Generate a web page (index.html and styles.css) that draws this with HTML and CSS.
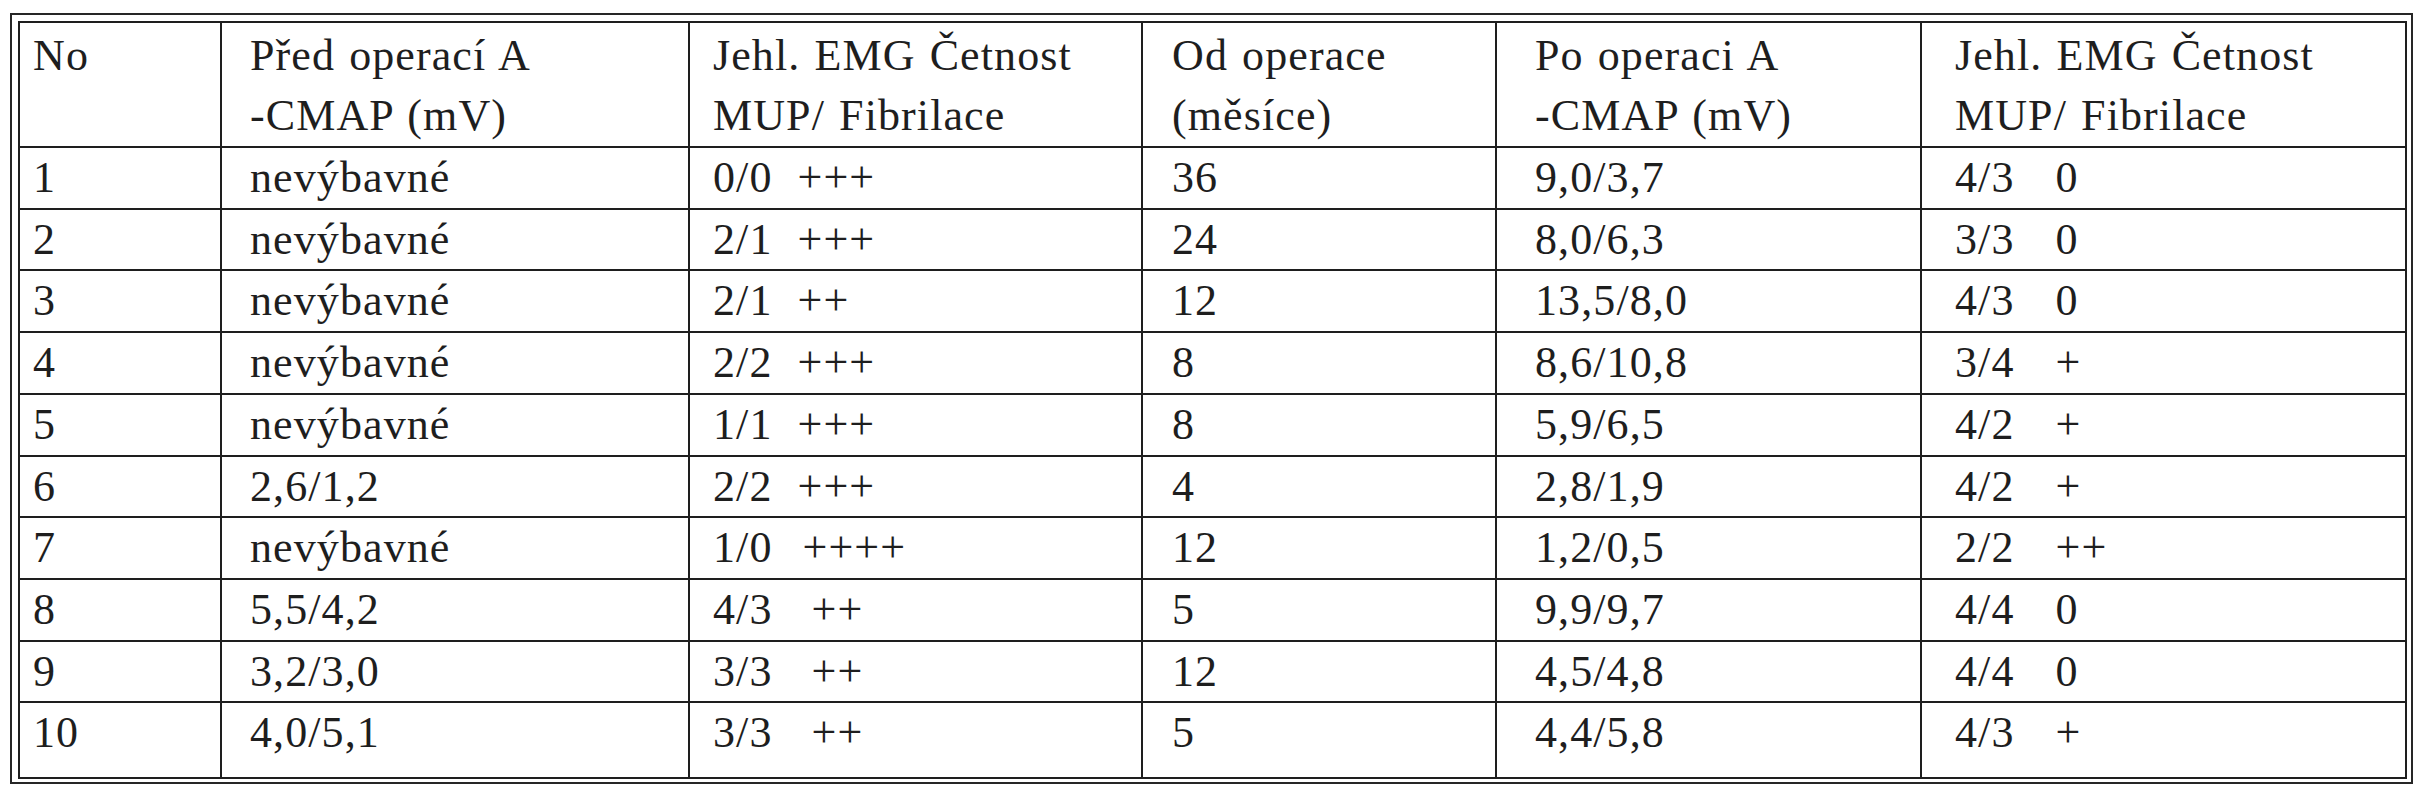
FILE: index.html
```html
<!DOCTYPE html>
<html lang="cs">
<head>
<meta charset="utf-8">
<title>Tabulka</title>
<link rel="stylesheet" href="styles.css">
</head>
<body>
<div class="frame">
<table class="data">
<thead>
<tr>
<th class="c1">No</th>
<th class="c2">Před operací A<br>-CMAP (mV)</th>
<th class="c3">Jehl. EMG Četnost<br>MUP/ Fibrilace</th>
<th class="c4">Od operace<br>(měsíce)</th>
<th class="c5">Po operaci A<br>-CMAP (mV)</th>
<th class="c6">Jehl. EMG Četnost<br>MUP/ Fibrilace</th>
</tr>
</thead>
<tbody>
<tr><td class="c1">1</td><td class="c2">nevýbavné</td><td class="c3">0/0<span class="ga">+++</span></td><td class="c4">36</td><td class="c5">9,0/3,7</td><td class="c6">4/3<span class="gd">0</span></td></tr>
<tr><td class="c1">2</td><td class="c2">nevýbavné</td><td class="c3">2/1<span class="ga">+++</span></td><td class="c4">24</td><td class="c5">8,0/6,3</td><td class="c6">3/3<span class="gd">0</span></td></tr>
<tr><td class="c1">3</td><td class="c2">nevýbavné</td><td class="c3">2/1<span class="ga">++</span></td><td class="c4">12</td><td class="c5">13,5/8,0</td><td class="c6">4/3<span class="gd">0</span></td></tr>
<tr><td class="c1">4</td><td class="c2">nevýbavné</td><td class="c3">2/2<span class="ga">+++</span></td><td class="c4">8</td><td class="c5">8,6/10,8</td><td class="c6">3/4<span class="gd">+</span></td></tr>
<tr><td class="c1">5</td><td class="c2">nevýbavné</td><td class="c3">1/1<span class="ga">+++</span></td><td class="c4">8</td><td class="c5">5,9/6,5</td><td class="c6">4/2<span class="gd">+</span></td></tr>
<tr><td class="c1">6</td><td class="c2">2,6/1,2</td><td class="c3">2/2<span class="ga">+++</span></td><td class="c4">4</td><td class="c5">2,8/1,9</td><td class="c6">4/2<span class="gd">+</span></td></tr>
<tr><td class="c1">7</td><td class="c2">nevýbavné</td><td class="c3">1/0<span class="gb">++++</span></td><td class="c4">12</td><td class="c5">1,2/0,5</td><td class="c6">2/2<span class="gd">++</span></td></tr>
<tr><td class="c1">8</td><td class="c2">5,5/4,2</td><td class="c3">4/3<span class="gc">++</span></td><td class="c4">5</td><td class="c5">9,9/9,7</td><td class="c6">4/4<span class="gd">0</span></td></tr>
<tr><td class="c1">9</td><td class="c2">3,2/3,0</td><td class="c3">3/3<span class="gc">++</span></td><td class="c4">12</td><td class="c5">4,5/4,8</td><td class="c6">4/4<span class="gd">0</span></td></tr>
<tr class="last"><td class="c1">10</td><td class="c2">4,0/5,1</td><td class="c3">3/3<span class="gc">++</span></td><td class="c4">5</td><td class="c5">4,4/5,8</td><td class="c6">4/3<span class="gd">+</span></td></tr>
</tbody>
</table>
</div>
</body>
</html>
```
FILE: styles.css
```css
html, body {
  margin: 0;
  padding: 0;
  background: #ffffff;
}

body {
  font-family: "Liberation Serif", "Times New Roman", serif;
  font-size: 44px;
  color: #1e1e1e;
}

.frame {
  box-sizing: border-box;
  width: 2403px;
  margin: 13px 0 0 10px;
  border: 2px solid #262626;
  padding: 6px 4px 3px 6px;
}

.data {
  border-collapse: separate;
  border-spacing: 0;
  table-layout: fixed;
  width: 2389px;
  border-top: 2px solid #1e1e1e;
  border-left: 2px solid #1e1e1e;
  font-family: "Liberation Serif", "Times New Roman", serif;
  font-size: 44px;
  letter-spacing: 1.1px;
  word-spacing: 2px;
}

.data th,
.data td {
  box-sizing: border-box;
  border-right: 2px solid #1e1e1e;
  border-bottom: 2px solid #1e1e1e;
  text-align: left;
  vertical-align: top;
  font-family: "Liberation Serif", "Times New Roman", serif;
  font-weight: normal;
  white-space: nowrap;
  padding-top: 0;
  padding-bottom: 0;
  padding-right: 0;
}

.data th {
  line-height: 60px;
  padding-top: 3px;
}

.data td {
  line-height: 58.7px;
  padding-top: 1px;
}

.data tr.last td {
  padding-bottom: 14px;
}

.c1 { width: 202px; padding-left: 13px; }
.c2 { width: 468px; padding-left: 28px; }
.c3 { width: 453px; padding-left: 23px; }
.c4 { width: 354px; padding-left: 29px; }
.c5 { width: 425px; padding-left: 38px; }
.c6 { width: 485px; padding-left: 33px; }

.ga { margin-left: 25px; }
.gb { margin-left: 30px; }
.gc { margin-left: 39px; }
.gd { margin-left: 41px; }
```
